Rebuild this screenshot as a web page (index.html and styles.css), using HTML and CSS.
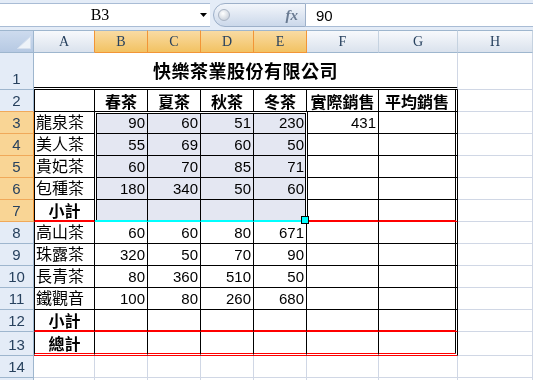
FILE: index.html
```html
<!DOCTYPE html>
<html lang="zh-Hant">
<head>
    <meta charset="UTF-8">
    <meta name="viewport" content="width=device-width, initial-scale=1.0">
    <title>快樂茶業股份有限公司</title>
    <link rel="stylesheet" href="styles.css">
</head>
<body>
    <div class="formula-bar">
        <div class="name-box">
            <span class="name">B3</span>
            <svg class="drop" width="7" height="4" viewBox="0 0 7 4"><path d="M0 0H7L3.5 4Z"/></svg>
        </div>
        <div class="fx-area">
            <span class="grip"></span>
            <span class="fx">fx</span>
        </div>
        <div class="formula-input">90</div>
    </div>

    <div class="sheet">
        <!-- column headers -->
        <div class="corner"><svg width="14" height="13" viewBox="0 0 14 13"><path d="M13.5 0.5V12.5H0.5Z" fill="#eef3f9" stroke="#d6e0ee"/></svg></div>
        <div class="ch pre">A</div>
        <div class="ch sel">B</div>
        <div class="ch sel">C</div>
        <div class="ch sel">D</div>
        <div class="ch sel">E</div>
        <div class="ch">F</div>
        <div class="ch">G</div>
        <div class="ch">H</div>

        <!-- row 1 -->
        <div class="rh">1</div>
        <div class="c title">快樂茶業股份有限公司</div>
        <div class="c"></div>

        <!-- row 2 -->
        <div class="rh pre">2</div>
        <div class="c t l"></div>
        <div class="c t hd">春茶</div>
        <div class="c t hd">夏茶</div>
        <div class="c t hd">秋茶</div>
        <div class="c t hd">冬茶</div>
        <div class="c t hd">實際銷售</div>
        <div class="c t g hd">平均銷售</div>
        <div class="c"></div>

        <!-- row 3 -->
        <div class="rh sel">3</div>
        <div class="c t l">龍泉茶</div>
        <div class="c t num">90</div>
        <div class="c t num">60</div>
        <div class="c t num">51</div>
        <div class="c t num">230</div>
        <div class="c t num">431</div>
        <div class="c t g"></div>
        <div class="c"></div>

        <!-- row 4 -->
        <div class="rh sel">4</div>
        <div class="c t l">美人茶</div>
        <div class="c t num">55</div>
        <div class="c t num">69</div>
        <div class="c t num">60</div>
        <div class="c t num">50</div>
        <div class="c t"></div>
        <div class="c t g"></div>
        <div class="c"></div>

        <!-- row 5 -->
        <div class="rh sel">5</div>
        <div class="c t l">貴妃茶</div>
        <div class="c t num">60</div>
        <div class="c t num">70</div>
        <div class="c t num">85</div>
        <div class="c t num">71</div>
        <div class="c t"></div>
        <div class="c t g"></div>
        <div class="c"></div>

        <!-- row 6 -->
        <div class="rh sel">6</div>
        <div class="c t l">包種茶</div>
        <div class="c t num">180</div>
        <div class="c t num">340</div>
        <div class="c t num">50</div>
        <div class="c t num">60</div>
        <div class="c t"></div>
        <div class="c t g"></div>
        <div class="c"></div>

        <!-- row 7 -->
        <div class="rh sel">7</div>
        <div class="c t l sum red">小計</div>
        <div class="c t cyan"></div>
        <div class="c t cyan"></div>
        <div class="c t cyan"></div>
        <div class="c t cyan"></div>
        <div class="c t red"></div>
        <div class="c t g red"></div>
        <div class="c"></div>

        <!-- row 8 -->
        <div class="rh">8</div>
        <div class="c t l">高山茶</div>
        <div class="c t num">60</div>
        <div class="c t num">60</div>
        <div class="c t num">80</div>
        <div class="c t num">671</div>
        <div class="c t"></div>
        <div class="c t g"></div>
        <div class="c"></div>

        <!-- row 9 -->
        <div class="rh">9</div>
        <div class="c t l">珠露茶</div>
        <div class="c t num">320</div>
        <div class="c t num">50</div>
        <div class="c t num">70</div>
        <div class="c t num">90</div>
        <div class="c t"></div>
        <div class="c t g"></div>
        <div class="c"></div>

        <!-- row 10 -->
        <div class="rh">10</div>
        <div class="c t l">長青茶</div>
        <div class="c t num">80</div>
        <div class="c t num">360</div>
        <div class="c t num">510</div>
        <div class="c t num">50</div>
        <div class="c t"></div>
        <div class="c t g"></div>
        <div class="c"></div>

        <!-- row 11 -->
        <div class="rh">11</div>
        <div class="c t l">鐵觀音</div>
        <div class="c t num">100</div>
        <div class="c t num">80</div>
        <div class="c t num">260</div>
        <div class="c t num">680</div>
        <div class="c t"></div>
        <div class="c t g"></div>
        <div class="c"></div>

        <!-- row 12 -->
        <div class="rh">12</div>
        <div class="c t l sum red">小計</div>
        <div class="c t red"></div>
        <div class="c t red"></div>
        <div class="c t red"></div>
        <div class="c t red"></div>
        <div class="c t red"></div>
        <div class="c t g red"></div>
        <div class="c"></div>

        <!-- row 13 -->
        <div class="rh">13</div>
        <div class="c t l sum dred">總計</div>
        <div class="c t dred"></div>
        <div class="c t dred"></div>
        <div class="c t dred"></div>
        <div class="c t dred"></div>
        <div class="c t dred"></div>
        <div class="c t g dred"></div>
        <div class="c"></div>

        <!-- row 14 -->
        <div class="rh">14</div>
        <div class="c"></div>
        <div class="c"></div>
        <div class="c"></div>
        <div class="c"></div>
        <div class="c"></div>
        <div class="c"></div>
        <div class="c"></div>
        <div class="c"></div>

        <!-- row 15, only its top edge is in view -->
        <div class="rh"></div>
        <div class="c"></div>
        <div class="c"></div>
        <div class="c"></div>
        <div class="c"></div>
        <div class="c"></div>
        <div class="c"></div>
        <div class="c"></div>
        <div class="c"></div>

        <!-- selected range B3:E7 -->
        <div class="selection"></div>
    </div>
</body>
</html>
```

FILE: styles.css
```css
* {
    box-sizing: border-box;
}

body {
    margin: 0;
    width: 533px;
    height: 380px;
    overflow: hidden;
    background: #fff;
    font-family: "Liberation Sans", "Noto Sans CJK TC", sans-serif;
    color: #000;
}

/* formula bar */
.formula-bar {
    display: flex;
    height: 30px;
    padding: 3px 0;
    background: #e4ecf7;
}

.name-box {
    width: 210px;
    display: flex;
    align-items: center;
    padding-right: 3px;
    background: #fff;
    border-top: 1px solid #a9bcd5;
    border-bottom: 1px solid #a9bcd5;
}

.name {
    flex: 1;
    text-align: center;
    font-family: "Liberation Serif", serif;
    font-size: 16px;
}

.fx-area {
    width: 93px;
    margin-left: 3px;
    display: flex;
    align-items: center;
    justify-content: space-between;
    padding: 0 7px 0 4px;
    border: 1px solid #9db0c9;
    border-radius: 12px 0 0 12px;
    background: linear-gradient(#f3f6fb, #cbd8ea);
}

.grip {
    width: 12px;
    height: 12px;
    border-radius: 50%;
    border: 1px solid #a9b4c4;
    background: radial-gradient(circle at 40% 35%, #ffffff, #bcc5d2);
}

.fx {
    font-family: "Liberation Serif", serif;
    font-style: italic;
    font-weight: 700;
    font-size: 15px;
    color: #6a7b92;
}

.formula-input {
    flex: 1;
    display: flex;
    align-items: center;
    padding-left: 10px;
    background: #fff;
    border-top: 1px solid #a9bcd5;
    border-bottom: 1px solid #a9bcd5;
    font-size: 15px;
}

/* sheet grid */
.sheet {
    position: relative;
    display: grid;
    grid-template-columns: 34px 61px repeat(4, 53px) 72px 79px 75px;
    grid-template-rows: 23px 37px repeat(11, 22px) 24px 22px 22px;
}

.corner {
    display: flex;
    align-items: flex-end;
    justify-content: flex-end;
    padding: 0 2px 3px 0;
    background: linear-gradient(#cddbee, #b6c9e3);
    border-top: 1px solid #9eb6ce;
    border-right: 1px solid #9eb6ce;
    border-bottom: 1px solid #9eb6ce;
}

.ch {
    display: flex;
    align-items: center;
    justify-content: center;
    background: linear-gradient(#f7f9fc, #dae2ed);
    border-top: 1px solid #9eb6ce;
    border-right: 1px solid #c5d2e0;
    border-bottom: 1px solid #9eb6ce;
    font-family: "Liberation Serif", serif;
    font-size: 14px;
    color: #27415e;
}

.ch.pre {
    border-right-color: #f29536;
}

.ch.sel {
    background: linear-gradient(#f9dba3, #f2c262);
    border-right-color: #f29536;
    border-bottom-color: #f29536;
}

.rh {
    display: flex;
    align-items: flex-end;
    justify-content: center;
    line-height: 21px;
    background: #e4ecf7;
    border-right: 1px solid #9eb6ce;
    border-bottom: 1px solid #9eb6ce;
    font-size: 15px;
    color: #27415e;
}

.rh.pre {
    border-bottom-color: #f0a95a;
}

.rh.sel {
    background: #f9d595;
    border-right-color: #f29536;
    border-bottom-color: #f0a95a;
}

/* cells */
.c {
    display: flex;
    align-items: center;
    padding: 0 1px;
    border-right: 1px solid #d0d7e5;
    border-bottom: 1px solid #d0d7e5;
    font-size: 16px;
    line-height: 1;
    white-space: nowrap;
}

.title {
    grid-column: span 7;
    justify-content: center;
    border-bottom: 3px double #000;
    font-family: "Noto Sans CJK TC", sans-serif;
    font-weight: 700;
    font-size: 18px;
    letter-spacing: 0.5px;
}

.t {
    border-color: #000;
}

.l {
    border-left: 1px solid #000;
}

.g {
    border-right: 3px double #000;
}

.num {
    justify-content: flex-end;
    padding-right: 2px;
    font-size: 15px;
}

.hd,
.sum {
    justify-content: center;
    font-family: "Noto Sans CJK TC", sans-serif;
    font-weight: 700;
}

.red {
    border-bottom: 2px solid #f00;
}

.cyan {
    border-bottom: 2px solid #0ff;
}

.dred {
    border-bottom: 3px double #f00;
}

/* selection overlay */
.selection {
    position: absolute;
    grid-column: 3 / 7;
    grid-row: 4 / 9;
    top: -1px;
    left: -1px;
    right: -1px;
    bottom: 2px;
    border: 1px solid #000;
    border-bottom: 0;
    box-shadow:
        inset 1px 0 0 #fff,
        inset -1px 0 0 #fff,
        inset 0 1px 0 #fff,
        inset 2px 0 0 #000,
        inset -2px 0 0 #000,
        inset 0 2px 0 #000;
    pointer-events: none;
}

.selection::before {
    content: "";
    position: absolute;
    top: 2px;
    left: 2px;
    right: 2px;
    bottom: 0;
    background: #e4e7f2;
    mix-blend-mode: multiply;
}

.selection::after {
    content: "";
    position: absolute;
    right: -2px;
    bottom: -4px;
    width: 6px;
    height: 6px;
    background: #0ff;
    border: 1px solid #000;
}
```
